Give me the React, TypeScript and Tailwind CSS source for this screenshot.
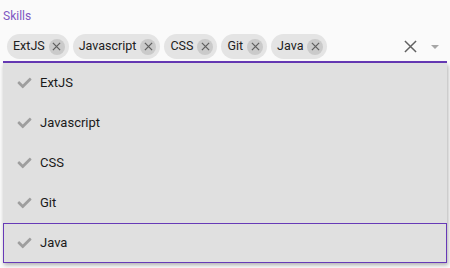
import { FaCheck } from "react-icons/fa";

const skills = ["ExtJS", "Javascript", "CSS", "Git", "Java"];

function Chip({ label }: { label: string }) {
  return (
    <div className="flex h-[25px] items-center rounded-full bg-[#e4e4e4] pl-[6px] pr-[4px]">
      <span className="text-[12.5px] text-[#212121]">{label}</span>
      <span className="ml-[4px] flex h-[16px] w-[16px] items-center justify-center rounded-full bg-[#cacaca]">
        <svg width="9" height="9" viewBox="0 0 10 10">
          <path d="M1 1 L9 9 M9 1 L1 9" stroke="#5f5f5f" strokeWidth="1.4" />
        </svg>
      </span>
    </div>
  );
}

export default function App() {
  return (
    <div
      className="h-[268px] w-[450px] overflow-hidden bg-[#fafafa] px-[3px]"
      style={{ fontFamily: "Roboto, 'Liberation Sans', sans-serif" }}
    >
      <div className="relative">
        <div className="pt-[9px] text-[12px] leading-[14px] text-[#7e57c2]">Skills</div>
        <div className="mt-[11px] flex items-center border-b-2 border-[#673ab7] pb-[2px] pl-[4px]">
          <div className="flex gap-[4px]">
            {skills.map((s) => (
              <Chip key={s} label={s} />
            ))}
          </div>
          <div className="ml-auto flex items-center gap-[14px] pr-[8px]">
            <svg width="13" height="13" viewBox="0 0 14 14">
              <path d="M1 1 L13 13 M13 1 L1 13" stroke="#616161" strokeWidth="1.6" />
            </svg>
            <svg width="8" height="4" viewBox="0 0 8 4">
              <path d="M0 0 L8 0 L4 4 Z" fill="#a6a6a6" />
            </svg>
          </div>
        </div>
        <div className="absolute left-0 right-0 top-[63px] bg-[#e0e0e0] shadow-[1px_2px_4px_rgba(0,0,0,0.3)]">
          {skills.map((s) => (
            <div
              key={s}
              className={
                s === "Java"
                  ? "flex h-[40px] items-center border border-[#673ab7] pl-[13px]"
                  : "flex h-[40px] items-center border border-transparent pl-[13px]"
              }
            >
              <FaCheck className="h-[14px] w-[15px] text-[#9e9e9e]" />
              <span className="ml-[8px] text-[13px] text-[#1a1a1a]">{s}</span>
            </div>
          ))}
        </div>
      </div>
    </div>
  );
}
